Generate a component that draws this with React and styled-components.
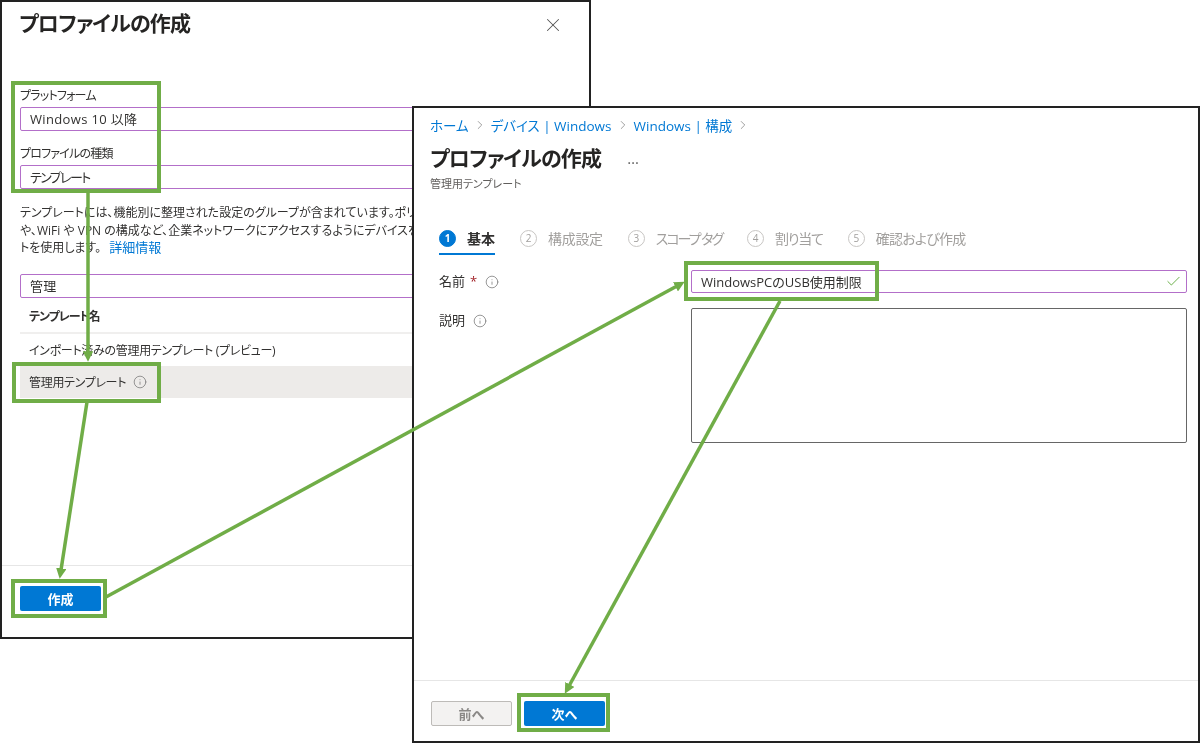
import React from "react";
import styled, { createGlobalStyle } from "styled-components";
import { X, Check, Info, ChevronRight } from "lucide-react";

const GlobalStyle = createGlobalStyle`
  html, body {
    margin: 0;
    background: #fff;
    font-family: "Open Sans", "Noto Sans CJK JP", sans-serif;
    font-feature-settings: "palt";
    color: #323130;
  }
`;

const STEPS = [
  { n: 1, label: "基本", active: true, spacing: 0 },
  { n: 2, label: "構成設定", spacing: -0.3 },
  { n: 3, label: "スコープ タグ", spacing: -2 },
  { n: 4, label: "割り当て", spacing: -1.2 },
  { n: 5, label: "確認および作成", spacing: -0.8 },
];

const GREEN = "#70ad47";

const BOXES = [
  [13, 83, 146, 108],
  [14, 364, 145, 37],
  [13, 581, 92, 35],
  [686, 263, 191, 36],
  [519, 695, 89, 35],
];

const ARROWS = [
  "M88 192 L88 353",
  "M87 402 L61 570",
  "M106 597 L677 286",
  "M780 301 L569 686",
];

const App = () => {
  return (
    <Canvas>
      <GlobalStyle />
      <LeftWindow>
        <TitleRow>
          <PanelTitle>プロファイルの作成</PanelTitle>
          <CloseBtn>
            <X size={22} strokeWidth={1.1} />
          </CloseBtn>
        </TitleRow>
        <LeftBody>
          <FieldLabel>プラットフォーム</FieldLabel>
          <SelectBox>Windows 10 以降</SelectBox>
          <FieldLabel $top={15}>プロファイルの種類</FieldLabel>
          <SelectBox $narrow>テンプレート</SelectBox>
          <Description>
            テンプレートには、機能別に整理された設定のグループが含まれています。ポリ
            <br />
            や、WiFi や VPN の構成など、企業ネットワークにアクセスするようにデバイスを
            <br />
            トを使用します。 <DocLink>詳細情報</DocLink>
          </Description>
          <SelectBox $top={17}>管理</SelectBox>
          <TableHead>テンプレート名</TableHead>
          <TableRow>インポート済みの管理用テンプレート (プレビュー)</TableRow>
          <TableRow $selected>
            管理用テンプレート
            <InfoIcon size={14} />
          </TableRow>
        </LeftBody>
        <Footer $height={72} $left={18}>
          <PrimaryButton>作成</PrimaryButton>
        </Footer>
      </LeftWindow>

      <RightWindow>
        <Breadcrumb>
          <Crumb>ホーム</Crumb>
          <Sep size={14} />
          <Crumb>デバイス | Windows</Crumb>
          <Sep size={14} />
          <Crumb>Windows | 構成</Crumb>
          <Sep size={14} />
        </Breadcrumb>
        <BladeHead>
          <PanelTitle>プロファイルの作成</PanelTitle>
          <More>…</More>
        </BladeHead>
        <Subtitle>管理用テンプレート</Subtitle>
        <Steps>
          {STEPS.map((s) => (
            <Step key={s.n} $active={s.active}>
              <StepNum $active={s.active}>{s.n}</StepNum>
              <StepLabel $active={s.active} $spacing={s.spacing}>
                {s.label}
              </StepLabel>
            </Step>
          ))}
        </Steps>
        <Form>
          <FormLabel>
            名前 <Req>*</Req>
            <InfoIcon size={14} />
          </FormLabel>
          <NameInput>
            WindowsPCのUSB使用制限
            <Check size={17} strokeWidth={1.4} color="#6bb04a" />
          </NameInput>
          <FormLabel $top={4}>
            説明
            <InfoIcon size={14} />
          </FormLabel>
          <TextArea />
        </Form>
        <Footer $height={61} $left={17}>
          <GhostButton>前へ</GhostButton>
          <PrimaryButton>次へ</PrimaryButton>
        </Footer>
      </RightWindow>

      <Overlay viewBox="0 0 1200 743">
        <defs>
          <marker id="head" markerWidth="3" markerHeight="3" refX="0.5" refY="1.5" orient="auto">
            <path d="M0 0 L3 1.5 L0 3 Z" fill={GREEN} />
          </marker>
        </defs>
        {ARROWS.map((d) => (
          <path key={d} d={d} stroke={GREEN} strokeWidth="3.5" fill="none" markerEnd="url(#head)" />
        ))}
        {BOXES.map(([x, y, w, h]) => (
          <rect key={x} x={x} y={y} width={w} height={h} fill="none" stroke={GREEN} strokeWidth="4" />
        ))}
      </Overlay>
    </Canvas>
  );
};

const Canvas = styled.div`
  position: relative;
  width: 1200px;
  height: 743px;
  overflow: hidden;
  background: #fff;
  filter: blur(0.3px);
`;

const Win = styled.div`
  position: absolute;
  box-sizing: border-box;
  display: flex;
  flex-direction: column;
  background: #fff;
  border: 2px solid #222;
  overflow: hidden;
`;

const LeftWindow = styled(Win)`
  left: 0;
  top: 0;
  width: 591px;
  height: 639px;
`;

const RightWindow = styled(Win)`
  left: 412px;
  top: 106px;
  width: 788px;
  height: 637px;
  padding-top: 8px;
`;

const TitleRow = styled.div`
  display: flex;
  align-items: center;
  justify-content: space-between;
  height: 42px;
  padding: 0 25px 0 17px;
`;

const PanelTitle = styled.h1`
  margin: 0;
  font-size: 21px;
  line-height: 30px;
  font-weight: 700;
  letter-spacing: -0.8px;
  color: #252423;
  white-space: nowrap;
`;

const CloseBtn = styled.div`
  display: flex;
  color: #555;
  margin-top: 4px;
`;

const LeftBody = styled.div`
  flex: 1;
  padding: 44px 0 0 18px;
  white-space: nowrap;
`;

const FieldLabel = styled.div`
  margin-top: ${(p) => p.$top || 0}px;
  font-size: 12px;
  line-height: 16px;
  letter-spacing: -0.8px;
  color: #323130;
`;

const SelectBox = styled.div`
  box-sizing: border-box;
  height: 24px;
  margin-top: ${(p) => p.$top || 3}px;
  padding-left: 9px;
  border: 1px solid #b36fc9;
  border-radius: 2px;
  font-size: 13px;
  line-height: 22px;
  letter-spacing: ${(p) => (p.$narrow ? "-1.6px" : "0.35px")};
  color: #323130;
`;

const Description = styled.p`
  margin: 15px 0 0;
  font-size: 12px;
  line-height: 17.5px;
  color: #323130;
`;

const DocLink = styled.a`
  margin-left: 5px;
  font-size: 13px;
  color: #0078d4;
`;

const TableHead = styled.div`
  box-sizing: border-box;
  height: 36px;
  padding: 9px 0 0 9px;
  font-size: 12px;
  line-height: 20px;
  font-weight: 700;
  letter-spacing: -1px;
  border-bottom: 2px solid #f0efee;
`;

const TableRow = styled.div`
  display: flex;
  align-items: center;
  gap: 7px;
  height: 32px;
  padding-left: 9px;
  font-size: 12px;
  letter-spacing: -0.3px;
  background: ${(p) => (p.$selected ? "#edebe9" : "transparent")};
`;

const InfoIcon = styled(Info)`
  color: #777;
  stroke-width: 1.3;
  flex: none;
`;

const Footer = styled.div`
  box-sizing: border-box;
  display: flex;
  align-items: flex-start;
  gap: 12px;
  flex: none;
  height: ${(p) => p.$height}px;
  padding: 20px 18px 0 ${(p) => p.$left}px;
  border-top: 1px solid #e6e6e6;
`;

const PrimaryButton = styled.button`
  width: 81px;
  height: 25px;
  padding: 0;
  border: none;
  border-radius: 2px;
  background: #0078d4;
  color: #fff;
  font-family: inherit;
  font-size: 13px;
  font-weight: 700;
`;

const GhostButton = styled(PrimaryButton)`
  box-sizing: border-box;
  background: #f3f2f1;
  border: 1px solid #bdbbb8;
  color: #8a8886;
`;

const Breadcrumb = styled.div`
  display: flex;
  align-items: center;
  gap: 4px;
  height: 18px;
  padding-left: 16px;
  white-space: nowrap;
`;

const Crumb = styled.a`
  font-size: 13.5px;
  color: #0078d4;
`;

const Sep = styled(ChevronRight)`
  color: #777;
  stroke-width: 1.2;
`;

const BladeHead = styled.div`
  display: flex;
  align-items: center;
  gap: 26px;
  margin-top: 9px;
  padding-left: 16px;
`;

const More = styled.span`
  font-size: 15px;
  color: #666;
`;

const Subtitle = styled.div`
  padding-left: 16px;
  margin-top: 3px;
  font-size: 11px;
  line-height: 16px;
  color: #605e5c;
`;

const Steps = styled.div`
  display: flex;
  gap: 25px;
  height: 32px;
  margin-top: 31px;
  padding-left: 25px;
  white-space: nowrap;
`;

const Step = styled.div`
  display: flex;
  align-items: center;
  gap: 11px;
  height: 32px;
  box-sizing: border-box;
  border-bottom: 2px solid ${(p) => (p.$active ? "#0078d4" : "transparent")};
`;

const StepNum = styled.span`
  box-sizing: border-box;
  display: flex;
  align-items: center;
  justify-content: center;
  width: 17px;
  height: 17px;
  border-radius: 50%;
  font-size: 10px;
  font-weight: ${(p) => (p.$active ? 700 : 400)};
  border: 1px solid ${(p) => (p.$active ? "#0078d4" : "#c8c6c4")};
  background: ${(p) => (p.$active ? "#0078d4" : "#fff")};
  color: ${(p) => (p.$active ? "#fff" : "#a19f9d")};
`;

const StepLabel = styled.span`
  font-size: 14px;
  font-weight: ${(p) => (p.$active ? 700 : 400)};
  letter-spacing: ${(p) => p.$spacing}px;
  color: ${(p) => (p.$active ? "#323130" : "#a19f9d")};
`;

const Form = styled.div`
  flex: 1;
  display: grid;
  grid-template-columns: 252px 496px;
  grid-template-rows: 23px 135px;
  row-gap: 15px;
  margin-top: 15px;
  padding-left: 25px;
`;

const FormLabel = styled.div`
  display: flex;
  align-items: ${(p) => (p.$top ? "flex-start" : "center")};
  gap: 8px;
  padding-top: ${(p) => p.$top || 0}px;
  font-size: 13px;
  line-height: 17px;
  color: #323130;

  svg {
    margin-top: ${(p) => (p.$top ? 2 : 0)}px;
  }
`;

const Req = styled.span`
  margin-left: -3px;
  color: #a4262c;
`;

const NameInput = styled.div`
  box-sizing: border-box;
  display: flex;
  align-items: center;
  justify-content: space-between;
  padding: 0 4px 0 9px;
  border: 1px solid #b36fc9;
  border-radius: 2px;
  font-size: 13px;
  color: #323130;
`;

const TextArea = styled.div`
  border: 1px solid #666;
  border-radius: 2px;
`;

const Overlay = styled.svg`
  position: absolute;
  inset: 0;
  width: 1200px;
  height: 743px;
  pointer-events: none;
`;

export default App;
